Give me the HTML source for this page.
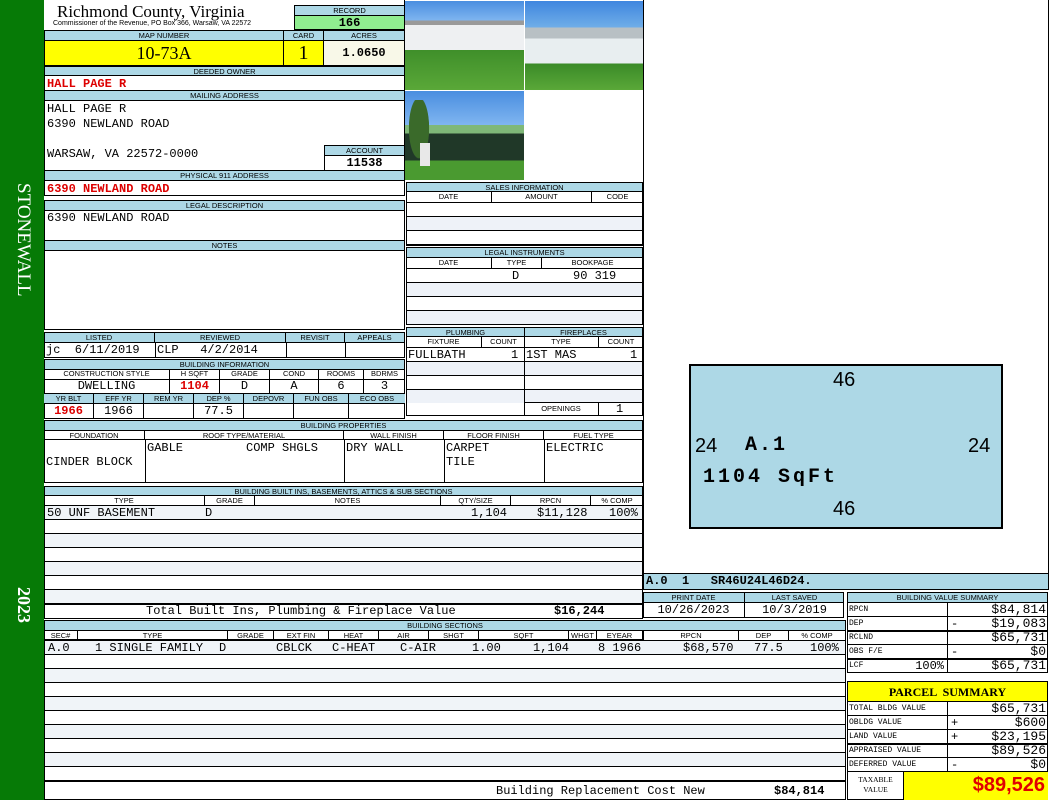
<!DOCTYPE html><html><head><meta charset="utf-8"><style>
*{margin:0;padding:0;box-sizing:border-box}
body{width:1050px;height:800px;position:relative;background:#fff;overflow:hidden;font-family:"Liberation Mono",monospace;font-size:12px;color:#000}
.a{position:absolute;white-space:nowrap}
.h{position:absolute;background:#add8e6;border:1px solid #000;font:7.5px/9px "Liberation Sans",sans-serif;text-align:center;white-space:nowrap;overflow:hidden}
.c{position:absolute;border:1px solid #000;white-space:nowrap;overflow:hidden;line-height:14px}
.s{position:absolute;font:7.5px/9px "Liberation Sans",sans-serif;text-align:center;border-right:1px solid #000;height:100%;top:0}
.r{color:#d00;font-weight:bold}
.rows{position:absolute;background:repeating-linear-gradient(#000 0 1px,#fff 1px 14px,#000 14px 15px,#eef2f8 15px 28px)}
</style></head><body>
<div class="a" style="left:0;top:0;width:44px;height:800px;background:#067a06"></div>
<div class="a" style="left:10px;top:165px;width:24px;height:150px;color:#fff;font:19px 'Liberation Serif',serif;writing-mode:vertical-rl;text-align:center">STONEWALL</div>
<div class="a" style="left:10px;top:587px;width:24px;height:40px;color:#fff;font:bold 18px 'Liberation Serif',serif;writing-mode:vertical-rl">2023</div>

<div class="a" style="left:57px;top:2px;font:17px 'Liberation Serif',serif">Richmond County, Virginia</div>
<div class="a" style="left:53px;top:20px;font:7px 'Liberation Sans',sans-serif">Commissioner of the Revenue, PO Box 366, Warsaw, VA 22572</div>
<div class="h" style="left:294px;top:5px;width:111px;height:11px">RECORD</div>
<div class="c" style="left:294px;top:15px;width:111px;height:15px;background:#90ee90;text-align:center;font-weight:bold">166</div>
<div class="h" style="left:44px;top:30px;width:240px;height:11px">MAP NUMBER</div>
<div class="h" style="left:283px;top:30px;width:41px;height:11px">CARD</div>
<div class="h" style="left:323px;top:30px;width:82px;height:11px">ACRES</div>
<div class="c" style="left:44px;top:40px;width:240px;height:26px;background:#ffff00;text-align:center;font:18px/24px 'Liberation Serif',serif">10-73A</div>
<div class="c" style="left:283px;top:40px;width:41px;height:26px;background:#ffff00;text-align:center;font:20px/24px 'Liberation Serif',serif">1</div>
<div class="c" style="left:323px;top:40px;width:82px;height:26px;background:#f8f8e8;text-align:center;font-weight:bold;line-height:24px">1.0650</div>
<div class="h" style="left:44px;top:66px;width:361px;height:10px">DEEDED OWNER</div>
<div class="c" style="left:44px;top:75px;width:361px;height:16px;padding:1px 2px" ><span class="r">HALL PAGE R</span></div>
<div class="h" style="left:44px;top:90px;width:361px;height:11px">MAILING ADDRESS</div>
<div class="c" style="left:44px;top:100px;width:361px;height:71px;padding:1px 2px;line-height:15px">HALL PAGE R<br>6390 NEWLAND ROAD<br><br>WARSAW, VA 22572-0000</div>
<div class="h" style="left:324px;top:145px;width:81px;height:11px">ACCOUNT</div>
<div class="c" style="left:324px;top:155px;width:81px;height:16px;text-align:center;font-weight:bold">11538</div>
<div class="h" style="left:44px;top:170px;width:361px;height:11px">PHYSICAL 911 ADDRESS</div>
<div class="c" style="left:44px;top:180px;width:361px;height:16px;padding:1px 2px"><span class="r">6390 NEWLAND ROAD</span></div>
<div class="h" style="left:44px;top:200px;width:361px;height:11px">LEGAL DESCRIPTION</div>
<div class="c" style="left:44px;top:210px;width:361px;height:31px;padding-left:2px">6390 NEWLAND ROAD</div>
<div class="h" style="left:44px;top:240px;width:361px;height:11px">NOTES</div>
<div class="c" style="left:44px;top:250px;width:361px;height:80px"></div>

<div class="c" style="left:44px;top:332px;width:361px;height:26px"></div>
<div class="h" style="left:45px;top:333px;width:359px;height:10px;border:none;border-bottom:1px solid #000"></div>
<div class="s" style="left:44px;top:333px;width:111px;height:10px">LISTED</div>
<div class="s" style="left:155px;top:333px;width:131px;height:10px">REVIEWED</div>
<div class="s" style="left:286px;top:333px;width:59px;height:10px">REVISIT</div>
<div class="s" style="left:345px;top:333px;width:59px;height:10px;border:none">APPEALS</div>
<div class="a" style="left:46px;top:343px;line-height:14px">jc &nbsp;6/11/2019</div>
<div class="a" style="left:155px;top:343px;width:1px;height:14px;background:#000"></div>
<div class="a" style="left:157px;top:343px;line-height:14px">CLP &nbsp;&nbsp;4/2/2014</div>
<div class="a" style="left:286px;top:343px;width:1px;height:14px;background:#000"></div>
<div class="a" style="left:345px;top:343px;width:1px;height:14px;background:#000"></div>

<div class="h" style="left:44px;top:359px;width:361px;height:11px">BUILDING INFORMATION</div>
<div class="c" style="left:44px;top:369px;width:361px;height:50px"></div>
<div class="a" style="left:44px;top:369px;width:361px;height:10px">
<div class="s" style="left:0;width:126px">CONSTRUCTION STYLE</div><div class="s" style="left:126px;width:50px">H SQFT</div><div class="s" style="left:176px;width:50px">GRADE</div><div class="s" style="left:226px;width:49px">COND</div><div class="s" style="left:275px;width:45px">ROOMS</div><div class="s" style="left:320px;width:41px;border:none">BDRMS</div></div>
<div class="a" style="left:44px;top:379px;width:361px;height:1px;background:#000"></div>
<div class="a" style="left:44px;top:380px;width:361px;height:13px">
<div class="s" style="left:0;width:126px;font:12px/13px 'Liberation Mono',monospace">DWELLING</div><div class="s" style="left:126px;width:50px;font:bold 12px/13px 'Liberation Mono',monospace;color:#d00">1104</div><div class="s" style="left:176px;width:50px;font:12px/13px 'Liberation Mono',monospace">D</div><div class="s" style="left:226px;width:49px;font:12px/13px 'Liberation Mono',monospace">A</div><div class="s" style="left:275px;width:45px;font:12px/13px 'Liberation Mono',monospace">6</div><div class="s" style="left:320px;width:41px;font:12px/13px 'Liberation Mono',monospace;border:none">3</div></div>
<div class="h" style="left:44px;top:393px;width:361px;height:11px;border-left:none;border-right:none"></div>
<div class="a" style="left:44px;top:394px;width:361px;height:24px">
<div class="s" style="left:0;width:50px;height:9px">YR BLT</div><div class="s" style="left:50px;width:50px;height:9px">EFF YR</div><div class="s" style="left:100px;width:50px;height:9px">REM YR</div><div class="s" style="left:150px;width:50px;height:9px">DEP %</div><div class="s" style="left:200px;width:50px;height:9px">DEPOVR</div><div class="s" style="left:250px;width:55px;height:9px">FUN OBS</div><div class="s" style="left:305px;width:56px;height:9px;border:none">ECO OBS</div>
<div class="s" style="top:10px;left:0;width:50px;height:14px;font:bold 12px/14px 'Liberation Mono',monospace;color:#d00">1966</div><div class="s" style="top:10px;left:50px;width:50px;height:14px;font:12px/14px 'Liberation Mono',monospace">1966</div><div class="s" style="top:10px;left:100px;width:50px;height:14px"></div><div class="s" style="top:10px;left:150px;width:50px;height:14px;font:12px/14px 'Liberation Mono',monospace">77.5</div><div class="s" style="top:10px;left:200px;width:50px;height:14px"></div><div class="s" style="top:10px;left:250px;width:55px;height:14px"></div></div>

<!-- photos -->
<div class="a" style="left:405px;top:1px;width:119px;height:89px;background:linear-gradient(#4a8ee0 0,#7fb5f0 22%,#9a9a9a 22%,#9a9a9a 27%,#eef0f2 27%,#eef0f2 55%,#3f8f2a 55%,#5aa838 100%)"></div>
<div class="a" style="left:525px;top:1px;width:118px;height:89px;background:linear-gradient(#3f86df 0,#70aee8 30%,#b8c0c4 30%,#b8c0c4 42%,#e8eef0 42%,#e8eef0 70%,#3a8a28 70%,#5aa838 100%)"></div>
<div class="a" style="left:405px;top:91px;width:119px;height:89px;background:linear-gradient(#4a8ee0 0,#7fb5f0 38%,#7fb878 38%,#7fb878 48%,#203828 48%,#203828 78%,#4a9a30 78%)"></div>
<div class="a" style="left:405px;top:100px;width:28px;height:70px;background:radial-gradient(ellipse at 50% 40%,#3a6a2a 0,#3a6a2a 50%,transparent 52%)"></div>
<div class="a" style="left:420px;top:143px;width:10px;height:23px;background:#e8e8e8"></div>
<div class="a" style="left:643px;top:0;width:406px;height:590px;border:1px solid #000;border-top:none"></div>
<div class="a" style="left:404px;top:0;width:1px;height:182px;background:#000"></div>

<!-- sales -->
<div class="c" style="left:406px;top:182px;width:237px;height:64px"></div>
<div class="h" style="left:406px;top:182px;width:237px;height:10px">SALES INFORMATION</div>
<div class="a" style="left:406px;top:192px;width:237px;height:10px">
<div class="s" style="left:0;width:86px">DATE</div><div class="s" style="left:86px;width:100px">AMOUNT</div><div class="s" style="left:186px;width:51px;border:none">CODE</div></div>
<div class="rows" style="left:407px;top:202px;width:235px;height:43px"></div>
<div class="c" style="left:406px;top:247px;width:237px;height:78px"></div>
<div class="h" style="left:406px;top:247px;width:237px;height:11px">LEGAL INSTRUMENTS</div>
<div class="a" style="left:406px;top:258px;width:237px;height:10px">
<div class="s" style="left:0;width:86px">DATE</div><div class="s" style="left:86px;width:50px">TYPE</div><div class="s" style="left:136px;width:101px;border:none">BOOKPAGE</div></div>
<div class="rows" style="left:407px;top:268px;width:235px;height:56px"></div>
<div class="a" style="left:512px;top:269px;line-height:14px">D</div>
<div class="a" style="left:573px;top:269px;line-height:14px">90 319</div>

<!-- plumbing -->
<div class="c" style="left:406px;top:327px;width:119px;height:89px"></div>
<div class="c" style="left:524px;top:327px;width:119px;height:76px"></div>
<div class="h" style="left:406px;top:327px;width:119px;height:10px">PLUMBING</div>
<div class="h" style="left:524px;top:327px;width:119px;height:10px">FIREPLACES</div>
<div class="a" style="left:406px;top:337px;width:119px;height:10px"><div class="s" style="left:0;width:76px">FIXTURE</div><div class="s" style="left:76px;width:43px;border:none">COUNT</div></div>
<div class="a" style="left:524px;top:337px;width:119px;height:10px"><div class="s" style="left:0;width:75px">TYPE</div><div class="s" style="left:75px;width:44px;border:none">COUNT</div></div>
<div class="rows" style="left:407px;top:347px;width:117px;height:56px"></div>
<div class="rows" style="left:525px;top:347px;width:117px;height:56px"></div>
<div class="a" style="left:408px;top:348px;line-height:14px">FULLBATH</div><div class="a" style="left:511px;top:348px;line-height:14px">1</div>
<div class="a" style="left:526px;top:348px;line-height:14px">1ST MAS</div><div class="a" style="left:630px;top:348px;line-height:14px">1</div>
<div class="c" style="left:524px;top:402px;width:119px;height:14px"></div>
<div class="a" style="left:524px;top:403px;width:75px;height:12px;border-right:1px solid #000;font:7.5px/12px 'Liberation Sans',sans-serif;text-align:center">OPENINGS</div>
<div class="a" style="left:616px;top:402px;line-height:14px">1</div>

<!-- building properties -->
<div class="h" style="left:44px;top:420px;width:599px;height:11px">BUILDING PROPERTIES</div>
<div class="c" style="left:44px;top:430px;width:599px;height:53px"></div>
<div class="a" style="left:44px;top:431px;width:599px;height:9px;border-bottom:1px solid #000">
<div class="s" style="left:0;width:101px">FOUNDATION</div><div class="s" style="left:101px;width:199px">ROOF TYPE/MATERIAL</div><div class="s" style="left:300px;width:100px">WALL FINISH</div><div class="s" style="left:400px;width:100px">FLOOR FINISH</div><div class="s" style="left:500px;width:99px;border:none">FUEL TYPE</div></div>
<div class="a" style="left:145px;top:440px;width:1px;height:42px;background:#000"></div>
<div class="a" style="left:344px;top:440px;width:1px;height:42px;background:#000"></div>
<div class="a" style="left:444px;top:440px;width:1px;height:42px;background:#000"></div>
<div class="a" style="left:544px;top:440px;width:1px;height:42px;background:#000"></div>
<div class="a" style="left:46px;top:455px;line-height:14px">CINDER BLOCK</div>
<div class="a" style="left:147px;top:441px;line-height:14px">GABLE</div>
<div class="a" style="left:246px;top:441px;line-height:14px">COMP SHGLS</div>
<div class="a" style="left:346px;top:441px;line-height:14px">DRY WALL</div>
<div class="a" style="left:446px;top:441px;line-height:14px">CARPET<br>TILE</div>
<div class="a" style="left:546px;top:441px;line-height:14px">ELECTRIC</div>

<!-- built ins -->
<div class="h" style="left:44px;top:486px;width:599px;height:10px">BUILDING BUILT INS, BASEMENTS, ATTICS &amp; SUB SECTIONS</div>
<div class="c" style="left:44px;top:495px;width:599px;height:124px"></div>
<div class="a" style="left:44px;top:496px;width:599px;height:9px">
<div class="s" style="left:0;width:161px">TYPE</div><div class="s" style="left:161px;width:50px">GRADE</div><div class="s" style="left:211px;width:186px">NOTES</div><div class="s" style="left:397px;width:70px">QTY/SIZE</div><div class="s" style="left:467px;width:80px">RPCN</div><div class="s" style="left:547px;width:52px;border:none">% COMP</div></div>
<div class="rows" style="left:45px;top:505px;width:597px;height:99px;background:repeating-linear-gradient(#000 0 1px,#f0f4f8 1px 14px,#000 14px 15px,#fff 15px 28px)"></div>
<div class="a" style="left:45px;top:604px;width:597px;height:1px;background:#000"></div>
<div class="a" style="left:47px;top:506px;line-height:14px">50 UNF BASEMENT</div>
<div class="a" style="left:205px;top:506px;line-height:14px">D</div>
<div class="a" style="left:471px;top:506px;line-height:14px">1,104</div>
<div class="a" style="left:537px;top:506px;line-height:14px">$11,128</div>
<div class="a" style="left:609px;top:506px;line-height:14px">100%</div>
<div class="a" style="left:146px;top:604px;line-height:14px">Total Built Ins, Plumbing &amp; Fireplace Value</div>
<div class="a" style="left:554px;top:604px;line-height:14px;font-weight:bold">$16,244</div>

<!-- building sections -->
<div class="h" style="left:44px;top:620px;width:802px;height:11px">BUILDING SECTIONS</div>
<div class="c" style="left:44px;top:630px;width:802px;height:170px"></div>
<div class="a" style="left:44px;top:631px;width:802px;height:9px;border-bottom:1px solid #000">
<div class="s" style="left:0;width:34px">SEC#</div><div class="s" style="left:34px;width:150px">TYPE</div><div class="s" style="left:184px;width:46px">GRADE</div><div class="s" style="left:230px;width:55px">EXT FIN</div><div class="s" style="left:285px;width:50px">HEAT</div><div class="s" style="left:335px;width:50px">AIR</div><div class="s" style="left:385px;width:50px">SHGT</div><div class="s" style="left:435px;width:90px">SQFT</div><div class="s" style="left:525px;width:28px">WHGT</div><div class="s" style="left:553px;width:46px">EYEAR</div><div class="s" style="left:599px;width:146px;border-right:1px solid #000">RPCN</div><div class="s" style="left:745px;width:0"></div></div>
<div class="a" style="left:744px;top:631px;width:102px;height:9px"><div class="s" style="left:0;width:0;border:none"></div></div>
<div class="a" style="left:738px;top:631px;width:1px;height:9px;background:#000"></div>
<div class="a" style="left:694px;top:631px;width:1px;height:9px;background:#000"></div>
<div class="a" style="left:694px;top:631px;width:44px;font:7.5px/9px 'Liberation Sans',sans-serif;text-align:center;background:#fff">DEP</div>
<div class="a" style="left:739px;top:631px;width:106px;height:9px;background:#fff"></div>
<div class="a" style="left:788px;top:631px;width:1px;height:9px;background:#000"></div>
<div class="a" style="left:739px;top:631px;width:49px;font:7.5px/9px 'Liberation Sans',sans-serif;text-align:center">DEP</div>
<div class="a" style="left:789px;top:631px;width:56px;font:7.5px/9px 'Liberation Sans',sans-serif;text-align:center">% COMP</div>
<div class="a" style="left:643px;top:631px;width:95px;height:9px;background:#fff;border-left:1px solid #000;font:7.5px/9px 'Liberation Sans',sans-serif;text-align:center">RPCN</div>
<div class="rows" style="left:45px;top:640px;width:800px;height:141px;background:repeating-linear-gradient(#000 0 1px,#f0f4f8 1px 14px,#000 14px 15px,#fff 15px 28px)"></div>
<div class="a" style="left:45px;top:781px;width:800px;height:1px;background:#000"></div>
<div class="a" style="left:48px;top:641px;line-height:14px">A.0</div>
<div class="a" style="left:95px;top:641px;line-height:14px">1 SINGLE FAMILY</div>
<div class="a" style="left:219px;top:641px;line-height:14px">D</div>
<div class="a" style="left:276px;top:641px;line-height:14px">CBLCK</div>
<div class="a" style="left:332px;top:641px;line-height:14px">C-HEAT</div>
<div class="a" style="left:400px;top:641px;line-height:14px">C-AIR</div>
<div class="a" style="left:472px;top:641px;line-height:14px">1.00</div>
<div class="a" style="left:533px;top:641px;line-height:14px">1,104</div>
<div class="a" style="left:598px;top:641px;line-height:14px">8 1966</div>
<div class="a" style="left:683px;top:641px;line-height:14px">$68,570</div>
<div class="a" style="left:754px;top:641px;line-height:14px">77.5</div>
<div class="a" style="left:810px;top:641px;line-height:14px">100%</div>
<div class="a" style="left:496px;top:784px;line-height:14px">Building Replacement Cost New</div>
<div class="a" style="left:774px;top:784px;line-height:14px;font-weight:bold">$84,814</div>

<!-- sketch -->
<div class="a" style="left:689px;top:364px;width:314px;height:165px;background:#add8e6;border:2px solid #000;font:20px 'Liberation Sans',sans-serif">
<div class="a" style="left:142px;top:3px">46</div>
<div class="a" style="left:142px;top:132px">46</div>
<div class="a" style="left:4px;top:69px">24</div>
<div class="a" style="left:277px;top:69px">24</div>
<div class="a" style="left:54px;top:68px;font:bold 20px 'Liberation Mono',monospace;letter-spacing:2px">A.1</div>
<div class="a" style="left:12px;top:100px;font:bold 20px 'Liberation Mono',monospace;letter-spacing:3px">1104 SqFt</div></div>

<div class="a" style="left:644px;top:573px;width:404px;height:16px;background:#add8e6;border-top:1px solid #000;font-weight:bold;line-height:15px;padding-left:2px;white-space:pre">A.0  1   SR46U24L46D24.</div>

<!-- print date -->
<div class="h" style="left:643px;top:592px;width:201px;height:11px"></div>
<div class="c" style="left:643px;top:602px;width:201px;height:16px"></div>
<div class="a" style="left:643px;top:593px;width:201px;height:25px">
<div class="s" style="left:0;width:102px;height:9px">PRINT DATE</div><div class="s" style="left:102px;width:99px;height:9px;border:none">LAST SAVED</div>
<div class="s" style="left:0;top:10px;width:102px;height:15px;font:12px/14px 'Liberation Mono',monospace">10/26/2023</div><div class="s" style="left:102px;top:10px;width:99px;height:15px;border:none;font:12px/14px 'Liberation Mono',monospace">10/3/2019</div></div>

<!-- building value summary -->
<div class="h" style="left:847px;top:592px;width:201px;height:11px">BUILDING VALUE SUMMARY</div>
<div class="c" style="left:847px;top:602px;width:201px;height:71px"></div>
<div class="a" style="left:947px;top:602px;width:1px;height:71px;background:#000"></div>
<div class="a" style="left:848px;top:616px;width:199px;height:1px;background:#000"></div>
<div class="a" style="left:848px;top:630px;width:199px;height:2px;background:#000"></div>
<div class="a" style="left:848px;top:644px;width:199px;height:1px;background:#000"></div>
<div class="a" style="left:848px;top:658px;width:199px;height:2px;background:#000"></div>
<div class="a" style="left:849px;top:603px;font:8px/14px 'Liberation Mono',monospace">RPCN<br>DEP<br>RCLND<br>OBS F/E<br>LCF</div>
<div class="a" style="left:884px;top:659px;width:60px;text-align:right;line-height:14px">100%</div>
<div class="a" style="left:951px;top:603px;line-height:14px">&nbsp;<br>-<br>&nbsp;<br>-</div>
<div class="a" style="left:950px;top:603px;width:96px;text-align:right;line-height:14px;font-size:13px">$84,814<br>$19,083<br>$65,731<br>$0<br>$65,731</div>

<!-- parcel summary -->
<div class="c" style="left:847px;top:681px;width:201px;height:21px;background:#ffff00;text-align:center;font:bold 12px/20px 'Liberation Serif',serif">PARCEL &nbsp;SUMMARY</div>
<div class="c" style="left:847px;top:701px;width:201px;height:99px"></div>
<div class="a" style="left:947px;top:701px;width:1px;height:71px;background:#000"></div>
<div class="a" style="left:848px;top:715px;width:199px;height:1px;background:#000"></div>
<div class="a" style="left:848px;top:729px;width:199px;height:1px;background:#000"></div>
<div class="a" style="left:848px;top:743px;width:199px;height:2px;background:#000"></div>
<div class="a" style="left:848px;top:757px;width:199px;height:1px;background:#000"></div>
<div class="a" style="left:848px;top:771px;width:199px;height:1px;background:#000"></div>
<div class="a" style="left:849px;top:702px;font:8px/14px 'Liberation Mono',monospace">TOTAL BLDG VALUE<br>OBLDG VALUE<br>LAND VALUE<br>APPRAISED VALUE<br>DEFERRED VALUE</div>
<div class="a" style="left:951px;top:702px;line-height:14px">&nbsp;<br>+<br>+<br>&nbsp;<br>-</div>
<div class="a" style="left:950px;top:702px;width:96px;text-align:right;line-height:14px;font-size:13px">$65,731<br>$600<br>$23,195<br>$89,526<br>$0</div>
<div class="a" style="left:848px;top:772px;width:55px;height:27px;font:7.5px/10px 'Liberation Serif',serif;text-align:center;padding-top:3px">TAXABLE<br>VALUE</div>
<div class="a" style="left:903px;top:772px;width:145px;height:28px;background:#ffff00;border-left:1px solid #000;color:#e00000;font:bold 20px/27px 'Liberation Sans',sans-serif;text-align:right;padding-right:3px">$89,526</div>
</body></html>
